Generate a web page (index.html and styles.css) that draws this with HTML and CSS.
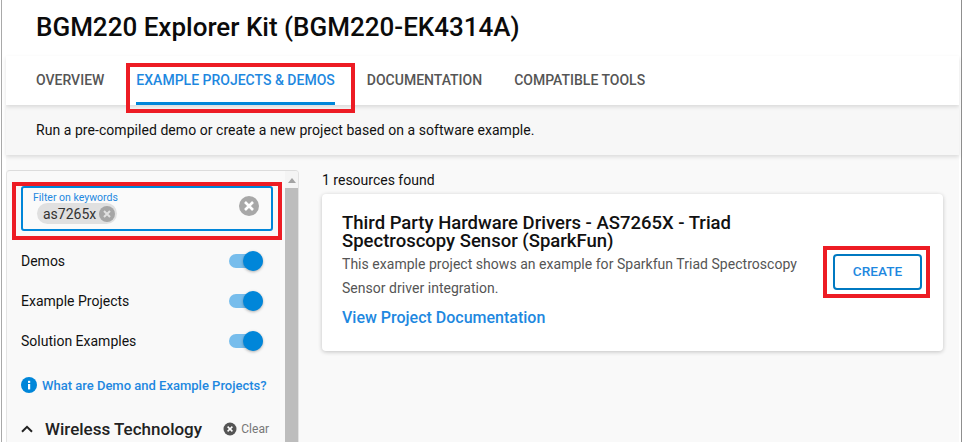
FILE: index.html
```html
<!DOCTYPE html>
<html lang="en">
<head>
    <meta charset="UTF-8">
    <meta name="viewport" content="width=device-width, initial-scale=1.0">
    <title>BGM220 Explorer Kit</title>
    <link rel="stylesheet" href="styles.css">
</head>
<body>
    <div class="edge-left"></div>
    <div class="app">
        <header class="title-bar">
            <h1>BGM220 Explorer Kit (BGM220-EK4314A)</h1>
        </header>
        <nav class="tabs">
            <a class="tab">OVERVIEW</a>
            <a class="tab active">EXAMPLE PROJECTS &amp; DEMOS</a>
            <a class="tab">DOCUMENTATION</a>
            <a class="tab">COMPATIBLE TOOLS</a>
            <span class="mark mark-tab"></span>
        </nav>
        <div class="intro">Run a pre-compiled demo or create a new project based on a software example.</div>
        <div class="content">
            <aside class="sidebar">
                <div class="side-scroll">
                    <div class="filter">
                        <label class="filter-label">Filter on keywords</label>
                        <div class="filter-row">
                            <span class="chip">as7265x
                                <svg class="chip-x" viewBox="0 0 16 16"><circle cx="8" cy="8" r="8" fill="#a6a6a6"/><path d="M5 5l6 6M11 5l-6 6" stroke="#e0e0e0" stroke-width="2"/></svg>
                            </span>
                            <svg class="filter-clear" viewBox="0 0 20 20"><circle cx="10" cy="10" r="10" fill="#a8a8a8"/><path d="M6 6l8 8M14 6l-8 8" stroke="#fff" stroke-width="2.6"/></svg>
                        </div>
                        <span class="mark mark-filter"></span>
                    </div>
                    <div class="switch-row"><span>Demos</span><span class="switch"><i></i></span></div>
                    <div class="switch-row"><span>Example Projects</span><span class="switch"><i></i></span></div>
                    <div class="switch-row"><span>Solution Examples</span><span class="switch"><i></i></span></div>
                    <a class="help">
                        <svg class="help-icon" viewBox="0 0 16 16"><circle cx="8" cy="8" r="8" fill="#0086d9"/><rect x="7" y="7" width="2.2" height="5.4" fill="#fff"/><rect x="7" y="3.8" width="2.2" height="2.1" fill="#fff"/></svg>
                        What are Demo and Example Projects?
                    </a>
                    <div class="group-head">
                        <svg class="chevron" viewBox="0 0 12 8"><path d="M1 6.8L6 1.8l5 5" fill="none" stroke="#222" stroke-width="2"/></svg>
                        <span class="group-title">Wireless Technology</span>
                        <span class="clear">
                            <svg class="clear-icon" viewBox="0 0 14 14"><circle cx="7" cy="7" r="6.5" fill="#555"/><path d="M4.6 4.6l4.8 4.8M9.4 4.6l-4.8 4.8" stroke="#fff" stroke-width="1.5"/></svg>
                            Clear
                        </span>
                    </div>
                </div>
                <div class="scrollbar">
                    <span class="scroll-up"></span>
                    <span class="scroll-thumb"></span>
                </div>
            </aside>
            <main class="results">
                <div class="count">1 resources found</div>
                <article class="card">
                    <div class="card-text">
                        <h2>Third Party Hardware Drivers - AS7265X - Triad Spectroscopy Sensor (SparkFun)</h2>
                        <p>This example project shows an example for Sparkfun Triad Spectroscopy Sensor driver integration.</p>
                        <a class="doc-link">View Project Documentation</a>
                    </div>
                    <div class="card-action">
                        <button class="create">CREATE</button>
                        <span class="mark mark-create"></span>
                    </div>
                </article>
            </main>
        </div>
    </div>
    <div class="edge-right"></div>
</body>
</html>
```

FILE: styles.css
```css
html, body {
    height: 100%;
}
body {
    margin: 0;
    display: flex;
    overflow: hidden;
    background: #fff;
    font-family: Roboto, "Liberation Sans", sans-serif;
    color: #111;
}
.edge-left {
    width: 1px;
    margin-right: 4px;
    border-right: 1px solid #a9a9a9;
}
.edge-right {
    width: 1px;
    margin-left: 2px;
    border-left: 1px solid #8f8f8f;
}
.app {
    flex: 1;
    min-width: 0;
    display: flex;
    flex-direction: column;
    background: #f9f9f9;
}
.title-bar {
    height: 56px;
    padding-left: 30px;
    background: #fff;
    box-sizing: border-box;
}
h1 {
    margin: 0;
    padding-top: 12px;
    font-size: 26px;
    line-height: 30px;
    font-weight: 500;
    color: #0b0b0b;
}
.tabs {
    position: relative;
    z-index: 2;
    height: 49px;
    display: flex;
    gap: 32px;
    padding-left: 30px;
    background: #fff;
    box-shadow: 0 2px 4px rgba(0, 0, 0, 0.12);
}
.tab {
    height: 49px;
    box-sizing: border-box;
    padding-top: 16px;
    font-size: 14px;
    line-height: 17px;
    font-weight: 500;
    color: #555;
}
.tab.active {
    color: #1e88e0;
    border-bottom: 3px solid #0086d9;
    height: 49px;
}
.intro {
    position: relative;
    z-index: 1;
    height: 50px;
    box-sizing: border-box;
    padding: 17px 0 0 30px;
    font-size: 14px;
    line-height: 17px;
    letter-spacing: 0.05px;
    background: #f7f7f7;
    box-shadow: 0 2px 4px rgba(0, 0, 0, 0.12);
}
.content {
    flex: 1;
    min-height: 0;
    display: flex;
    padding-top: 15px;
}
.sidebar {
    width: 293px;
    display: flex;
    border-top: 1px solid #dcdcdc;
    border-right: 1px solid #e2e2e2;
    border-top-right-radius: 4px;
    border-left: 1px solid #e4e4e4;
    border-top-left-radius: 4px;
    box-sizing: border-box;
    overflow: hidden;
}
.side-scroll {
    flex: 1;
    min-width: 0;
    padding: 15px 12px 0 14px;
}
.filter {
    position: relative;
    height: 45px;
    margin-bottom: 10px;
    box-sizing: border-box;
    border: 2px solid #0086d9;
    border-radius: 3px;
    padding: 3px 0 0 10px;
    background: #fafafa;
}
.filter-label {
    display: block;
    font-size: 10.5px;
    line-height: 13px;
    color: #1e88e0;
}
.filter-row {
    display: flex;
    align-items: center;
    justify-content: space-between;
    padding-right: 12px;
    margin-top: -4px;
}
.chip {
    display: flex;
    align-items: center;
    gap: 3px;
    height: 21px;
    margin-left: 4px;
    margin-top: 3px;
    padding: 0 2px 0 6px;
    border-radius: 11px;
    background: #e0e0e0;
    font-size: 14px;
    color: #333;
}
.chip-x {
    width: 16px;
    height: 16px;
}
.filter-clear {
    width: 20px;
    height: 20px;
    margin-top: -12px;
}
.switch-row {
    display: flex;
    align-items: center;
    justify-content: space-between;
    height: 40px;
    padding-right: 10px;
    font-size: 14px;
}
.switch {
    position: relative;
    width: 34px;
    height: 14px;
    border-radius: 7px;
    background: #77bdec;
}
.switch i {
    position: absolute;
    right: 0;
    top: -3px;
    width: 20px;
    height: 20px;
    border-radius: 50%;
    background: #0086d9;
    box-shadow: 0 1px 3px rgba(0, 0, 0, 0.3);
}
.help {
    display: flex;
    align-items: center;
    gap: 5px;
    height: 16px;
    margin-top: 16px;
    font-size: 13px;
    font-weight: 500;
    color: #1e88e0;
    white-space: nowrap;
}
.help-icon {
    width: 16px;
    height: 16px;
    flex: none;
}
.group-head {
    display: flex;
    align-items: center;
    margin-top: 25px;
    height: 22px;
}
.chevron {
    width: 12px;
    height: 8px;
    margin-right: 12px;
}
.group-title {
    font-size: 17px;
    font-weight: 500;
    color: #222;
    white-space: nowrap;
}
.clear {
    display: flex;
    align-items: center;
    gap: 4px;
    margin-left: auto;
    font-size: 12px;
    color: #777;
    padding-right: 4px;
}
.clear-icon {
    width: 14px;
    height: 14px;
}
.scrollbar {
    width: 13px;
    flex: none;
    display: flex;
    flex-direction: column;
    align-items: center;
    background: #f4f4f4;
}
.scroll-up {
    margin-top: 7px;
    border-left: 4px solid transparent;
    border-right: 4px solid transparent;
    border-bottom: 5px solid #a3a3a3;
}
.scroll-thumb {
    flex: 1;
    width: 100%;
    margin-top: 5px;
    background: #bdbdbd;
}
.results {
    flex: 1;
    min-width: 0;
    padding: 2px 16px 0 23px;
}
.count {
    height: 16px;
    font-size: 14px;
    line-height: 16px;
}
.card {
    display: flex;
    height: 157px;
    margin-top: 6px;
    box-sizing: border-box;
    border-radius: 4px;
    background: #fff;
    box-shadow: 0 1px 4px rgba(0, 0, 0, 0.22);
}
.card-text {
    width: 478px;
    padding: 20px 0 0 20px;
}
h2 {
    margin: 0;
    font-size: 18.5px;
    line-height: 18px;
    font-weight: 500;
    color: #111;
}
.card-text p {
    margin: 2px 0 0;
    font-size: 14px;
    line-height: 24px;
    letter-spacing: 0.03px;
    color: #555;
}
.doc-link {
    display: block;
    margin-top: 8px;
    font-size: 16px;
    line-height: 20px;
    font-weight: 500;
    color: #1e88e0;
}
.card-action {
    position: relative;
    margin-left: 13px;
    padding-top: 60px;
}
.create {
    width: 89px;
    height: 36px;
    padding: 0 0 2px;
    border: 2px solid #0079c1;
    border-radius: 4px;
    background: #fff;
    font-family: inherit;
    font-size: 13.6px;
    font-weight: 500;
    color: #1e88e0;
}
/* red annotation frames drawn over the screenshot */
.mark {
    position: absolute;
    border: 4px solid #ed1c24;
    box-sizing: border-box;
    pointer-events: none;
}
.mark-tab {
    left: 120px;
    top: 7px;
    width: 229px;
    height: 50px;
}
.mark-filter {
    left: -11px;
    top: -6px;
    width: 270px;
    height: 58px;
}
.mark-create {
    left: -10px;
    top: 52px;
    width: 107px;
    height: 52px;
}
```
